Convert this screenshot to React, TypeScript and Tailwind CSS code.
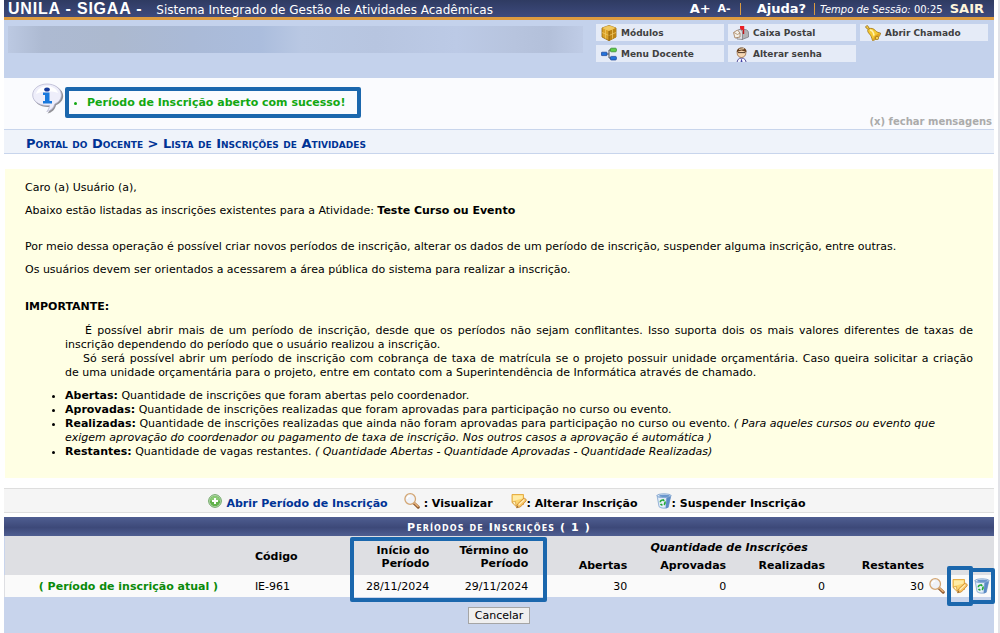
import type { ReactNode } from "react";

const QUICK_LINKS: { label: string; icon: ReactNode }[] = [
  { label: "Módulos", icon: <BoxIcon /> },
  { label: "Caixa Postal", icon: <MailboxIcon /> },
  { label: "Abrir Chamado", icon: <BellIcon /> },
  { label: "Menu Docente", icon: <TreeIcon /> },
  { label: "Alterar senha", icon: <UserIcon /> },
];

const PERIODS = [
  { code: "IE-961", start: "28/11/2024", end: "29/11/2024", open: 30, approved: 0, done: 0, left: 30 },
];

export default function App() {
  return (
    <div className="border-r-2 border-[#e2e3e8] bg-white pl-1 pr-1 font-['DejaVu_Sans',Verdana,sans-serif] text-[11px] leading-[14px] text-black">
      <TopBar />
      <UserPanel />
      <Messages />
      <h2 className="border-y border-[#c8d5ec] bg-[#eff3fa] px-[22px] pt-[6px] pb-[2px] text-[13px] leading-[15px] font-bold text-[#003395] [font-variant:small-caps]">
        <a href="#portal">Portal do Docente</a> &gt; Lista de Inscrições de Atividades
      </h2>
      <Description />
      <Legend />
      <PeriodsTable />
    </div>
  );
}

function TopBar() {
  return (
    <header className="flex h-5 items-center border-b-[3px] border-[#dc9b40] bg-linear-to-b from-[#2f3b62] to-[#3d4a7d] pl-1 pr-[10px] text-white">
      <h1 className="font-['Liberation_Sans',Arial,sans-serif] text-[16px] font-bold tracking-wider whitespace-nowrap">UNILA - SIGAA -</h1>
      <span className="ml-[14px] pt-[2px] text-[12px] whitespace-nowrap">Sistema Integrado de Gestão de Atividades Acadêmicas</span>
      <nav className="ml-auto flex items-center whitespace-nowrap font-bold">
        <button type="button" className="text-[13px]">A+</button>
        <button type="button" className="ml-[7px] text-[11px]">A-</button>
        <span className="ml-[9px] h-3 w-px bg-[#dc9b40]" />
        <a href="#ajuda" className="ml-[16px] text-[13px]">Ajuda?</a>
        <span className="ml-[8px] h-3 w-px bg-[#dc9b40]" />
        <span className="ml-[5px] pt-[2px] text-[10px] font-normal"><em>Tempo de Sessão:</em> 00:25</span>
        <a href="#sair" className="ml-[7px] text-[13px] text-[#fff5dc]">SAIR</a>
      </nav>
    </header>
  );
}

function UserPanel() {
  return (
    <section className="flex h-[58px] items-start bg-[#c4d2ec] pl-1 pr-[6px] pt-1">
      <div className="mt-[2px] mr-[13px] h-[27px] flex-1 bg-[linear-gradient(90deg,#bcc9e2_0%,#adbad2_6%,#acb9cf_18%,#aabad7_32%,#abbddd_44%,#b9c8e3_51%,#b7c5e0_64%,#bccae6_78%,#b7c4de_88%,#b3c0da_94%,#bfcce6_100%)]" />
      <nav className="grid w-[392px] grid-cols-3 gap-1">
        {QUICK_LINKS.map((l) => (
          <a key={l.label} href="#menu" className="flex h-[17px] items-center gap-1 overflow-hidden bg-[#e5ebf7] pl-[5px] text-[9px] font-bold whitespace-nowrap text-[#404040]">
            {l.icon}
            {l.label}
          </a>
        ))}
      </nav>
    </section>
  );
}

function Messages() {
  return (
    <section className="flex h-[51px] items-start bg-[#fafbfe] pl-7">
      <InfoIcon />
      <ul className="mt-[9px] ml-[1px] list-disc rounded-[2px] border-4 border-[#1b67ad] pt-[5px] pb-[4px] pl-[18px] pr-3 font-bold text-[#12a812]">
        <li>Período de Inscrição aberto com sucesso!</li>
      </ul>
      <button type="button" className="mr-[2px] ml-auto self-end text-[10px] font-bold text-[#ababab]">(x) fechar mensagens</button>
    </section>
  );
}

function Description() {
  return (
    <section className="mx-px mt-[15px] bg-[#ffffe4] px-5 pt-3 pb-[19px]">
      <p>Caro (a) Usuário (a),</p>
      <p className="mt-[9px]">
        Abaixo estão listadas as inscrições existentes para a Atividade: <b>Teste Curso ou Evento</b>
      </p>
      <p className="mt-[22px]">
        Por meio dessa operação é possível criar novos períodos de inscrição, alterar os dados de um período de inscrição, suspender alguma inscrição, entre outras.
      </p>
      <p className="mt-[9px]">Os usuários devem ser orientados a acessarem a área pública do sistema para realizar a inscrição.</p>
      <p className="mt-[23px] font-bold">IMPORTANTE:</p>
      <div className="mt-[10px] ml-10 text-justify">
        <p className="indent-5">
          É possível abrir mais de um período de inscrição, desde que os períodos não sejam conflitantes. Isso suporta dois os mais valores diferentes de taxas de inscrição dependendo do período que o usuário realizou a inscrição.
        </p>
        <p className="indent-[18px]">
          Só será possível abrir um período de inscrição com cobrança de taxa de matrícula se o projeto possuir unidade orçamentária. Caso queira solicitar a criação de&nbsp;uma unidade orçamentária para o projeto, entre em contato com a Superintendência de Informática através de chamado.
        </p>
      </div>
      <ul className="mt-[9px] list-disc pl-10">
        <li><b>Abertas:</b> Quantidade de inscrições que foram abertas pelo coordenador.</li>
        <li><b>Aprovadas:</b> Quantidade de inscrições realizadas que foram aprovadas para participação no curso ou evento.</li>
        <li>
          <b>Realizadas:</b> Quantidade de inscrições realizadas que ainda não foram aprovadas para participação no curso ou evento. <i>( Para aqueles cursos ou evento que exigem aprovação do coordenador ou pagamento de taxa de inscrição. Nos outros casos a aprovação é automática )</i>
        </li>
        <li><b>Restantes:</b> Quantidade de vagas restantes. <i>( Quantidade Abertas - Quantidade Aprovadas - Quantidade Realizadas)</i></li>
      </ul>
    </section>
  );
}

function Legend() {
  return (
    <div className="mt-[10px] flex h-[25px] items-center justify-center border-y border-[#dedede] bg-[#f5f5f5] pl-4 font-bold whitespace-nowrap">
      <PlusIcon />
      <a href="#abrir" className="mt-[6px] ml-1 text-[#003395]">Abrir Período de Inscrição</a>
      <span className="ml-4 flex"><LensIcon /></span>
      <span className="mt-[6px] ml-1">: Visualizar</span>
      <span className="ml-[18px] flex"><EditIcon /></span>
      <span className="mt-[6px]">: Alterar Inscrição</span>
      <span className="ml-[18px] flex"><TrashIcon /></span>
      <span className="mt-[6px]">: Suspender Inscrição</span>
    </div>
  );
}

function PeriodsTable() {
  return (
    <form className="mt-1 bg-[#c8d4ec] pb-[9px]">
      <table className="w-full table-fixed border-collapse">
        <caption className="h-[19px] bg-[linear-gradient(#4f5e91,#3d4979_55%,#4f5e91)] pt-[4px] text-[11px] font-bold tracking-widest text-white [font-variant:small-caps]">
          Períodos de Inscrições ( 1 )
        </caption>
        <colgroup>
          <col className="w-[25%]" />
          <col />
          <col className="w-[10%]" />
          <col className="w-[10%]" />
          <col className="w-[10%]" />
          <col className="w-[10%]" />
          <col className="w-[10%]" />
          <col className="w-[10%]" />
          <col className="w-[22px]" />
          <col className="w-[22px]" />
          <col className="w-[23px]" />
        </colgroup>
        <thead className="bg-[#dedfe3]">
          <tr className="h-[21px]">
            <th rowSpan={2} />
            <th rowSpan={2} className="px-[3px] pt-[2px] text-left">Código</th>
            <th rowSpan={2} className="relative pt-[2px] pr-[3px] pl-4 text-right leading-[13px]">
              Início do Período
              <span aria-hidden className="absolute -right-[115px] left-[17px] top-px h-[65px] rounded-[2px] border-4 border-[#1b67ad]" />
            </th>
            <th rowSpan={2} className="pt-[2px] pr-[3px] pl-4 text-right leading-[13px]">Término do Período</th>
            <th colSpan={4} className="pt-[2px] italic">Quantidade de Inscrições</th>
            <th rowSpan={2} colSpan={3} />
          </tr>
          <tr className="h-[18px] text-right align-top">
            <th className="px-[3px] pt-[2px]">Abertas</th>
            <th className="px-[3px] pt-[2px]">Aprovadas</th>
            <th className="px-[3px] pt-[2px]">Realizadas</th>
            <th className="px-[3px] pt-[2px]">Restantes</th>
          </tr>
        </thead>
        <tbody>
          {PERIODS.map((p) => (
            <tr key={p.code} className="h-[22px] bg-[#fafafa] text-right">
              <td className="border-l border-[#dedfe3] pt-[2px] text-center font-bold text-[#0a8a0a]">( Período de inscrição atual )</td>
              <td className="px-[3px] pt-[2px] text-left">{p.code}</td>
              <td className="px-[3px] pt-[2px]">{p.start}</td>
              <td className="px-[3px] pt-[2px]">{p.end}</td>
              <td className="px-[3px] pt-[2px]">{p.open}</td>
              <td className="px-[3px] pt-[2px]">{p.approved}</td>
              <td className="px-[3px] pt-[2px]">{p.done}</td>
              <td className="px-[3px] pt-[2px]">{p.left}</td>
              <td className="pl-[2px]">
                <button type="button" aria-label="Visualizar" className="flex"><LensIcon /></button>
              </td>
              <td className="pl-[3px]">
                <button type="button" aria-label="Alterar Inscrição" className="relative flex">
                  <EditIcon />
                  <span aria-hidden className="absolute -inset-x-[5px] -top-3 -bottom-3 rounded-[2px] border-4 border-[#1b67ad]" />
                </button>
              </td>
              <td className="pl-[3px]">
                <button type="button" aria-label="Suspender Inscrição" className="relative flex">
                  <TrashIcon />
                  <span aria-hidden className="absolute -inset-x-[5px] -inset-y-[10px] rounded-[2px] border-4 border-[#1b67ad]" />
                </button>
              </td>
            </tr>
          ))}
        </tbody>
      </table>
      <div className="flex justify-center pt-[10px]">
        <button type="button" className="h-[17px] border border-[#a5a5a5] bg-[#efefef] px-[6px]">Cancelar</button>
      </div>
    </form>
  );
}

function InfoIcon() {
  return (
    <svg className="mt-[5px] h-8 w-8 shrink-0" viewBox="0 0 32 32">
      <path d="M16 2C8 2 1.500 6.500 1.500 13S8 24 16 24c.9 0 1.600 0 2.500-.2-.4 3-1.500 5.200-3 6.700 4.500-.8 7.500-4 8.500-8.200 4-1.700 7.200-5 7.200-9.300C31.200 6.500 24 2 16 2z" fill="#77777c" opacity=".8" />
      <path d="M15 1C7 1 .7 5.700.7 12S7 22.500 15 22.500c.9 0 1.600 0 2.500-.2-.2 2.700-1.200 4.700-2.700 6.200 4.200-1 7-3.500 7.900-7.500 4-1.700 6.600-5 6.600-9C29.300 5.700 23 1 15 1z" fill="#eeeefa" stroke="#b9b9d2" strokeWidth=".8" />
      <path d="M4 11C5 6 10 3 15 3s10 3 11 7c-6-2-15-2-22 1z" fill="#fff" />
      <ellipse cx="15" cy="6.500" rx="2.800" ry="2" fill="#153b9b" />
      <path d="M11 9.500h6.500V18H20v2.500h-9V18h2v-6h-2z" fill="#1979dc" />
    </svg>
  );
}

function BoxIcon() {
  return (
    <svg className="h-4 w-4 shrink-0" viewBox="0 0 16 16">
      <path d="M1 3l7-2.500L15 3v9l-7 3.700L1 12z" fill="#dba22a" stroke="#94670f" strokeWidth=".8" />
      <path d="M1 3l7-2.500L15 3 8 6z" fill="#f0c75c" />
      <path d="M8 6l7-3v9l-7 3.700z" fill="#bd8415" />
      <path d="M1 7.500l7 3 7-3M4.500 1.700L11.500 4.600v9M11.500 1.700L4.500 4.600v9" fill="none" stroke="#f0cc68" strokeWidth=".7" />
      <path d="M8 6v9.500" stroke="#7d530b" strokeWidth=".8" />
    </svg>
  );
}

function MailboxIcon() {
  return (
    <svg className="h-4 w-4 shrink-0" viewBox="0 0 16 16">
      <path d="M6 4.500h6c2 0 3.500 1.500 3.500 3.500v4L9 14.500 6 11z" fill="#b2b2b5" stroke="#737378" strokeWidth=".7" />
      <path d="M4 14V8c0-2 1-3.500 2.700-3.500S9.500 6 9.500 8v6.500z" fill="#dedee2" stroke="#77777c" strokeWidth=".7" />
      <path d="M.5 7.500l4-2.500 2.500 3v4l-5 1z" fill="#f4f0e7" stroke="#a17a55" strokeWidth=".8" />
      <path d="M1 7.500l3.500 2L7 8" fill="none" stroke="#a17a55" strokeWidth=".7" />
      <path d="M10.500 9V1" stroke="#c31319" strokeWidth="1.400" />
      <path d="M7 1h4v4H8.700L7 3.500z" fill="#ea1f25" />
    </svg>
  );
}

function BellIcon() {
  return (
    <svg className="h-4 w-4 shrink-0" viewBox="0 0 16 16">
      <path d="M1.500.8C.3 1.500.5 3 2 3.500l1.500 1.300 1-1L3.500 2C3 .8 2.300.4 1.500.8z" fill="#f6d148" stroke="#92640e" strokeWidth=".8" />
      <path d="M3 4.500C4 3.200 7 2.800 9 4.300s2 3 6.500 3.700c0 3-4 7-8 7.500C6.500 12 6 10.500 4.500 9S2.200 5.800 3 4.500z" fill="#f5ca35" stroke="#a2730f" strokeWidth=".8" />
      <path d="M5 5c2 .2 3.500 2.500 4 5.500" stroke="#fff3ae" strokeWidth="1.600" fill="none" />
      <path d="M7.800 15.100C8.500 12 11 9 15 8.300c.2 2.700-4 6.500-7.200 6.800z" fill="#dda321" />
      <circle cx="12" cy="13" r="1.700" fill="#f4cf4a" stroke="#936510" strokeWidth=".6" />
    </svg>
  );
}

function TreeIcon() {
  return (
    <svg className="h-4 w-4 shrink-0" viewBox="0 0 16 16">
      <path d="M5 8h3M10 4H8v8h2" fill="none" stroke="#555" strokeWidth="1" />
      <rect x=".4" y="6.200" width="5.600" height="3.400" rx=".6" fill="#2474dc" stroke="#173f90" strokeWidth=".7" />
      <rect x="9.400" y="2.200" width="6" height="3.600" rx="1" fill="#5fd04a" stroke="#2c7f25" strokeWidth=".7" />
      <rect x="9.400" y="10.400" width="6" height="3.600" rx="1" fill="#2474dc" stroke="#173f90" strokeWidth=".7" />
    </svg>
  );
}

function UserIcon() {
  return (
    <svg className="mt-[2px] h-4 w-4 shrink-0" viewBox="0 0 16 16">
      <path d="M4 16c.2-3 1.500-5 4.500-5s4.500 2 4.700 5z" fill="#f4f4ff" stroke="#55529a" strokeWidth="1" />
      <path d="M8.500 11l-1.200 5h2.500z" fill="#4544a8" />
      <circle cx="8.500" cy="6.200" r="4.300" fill="#f7d7b2" stroke="#8b5a31" strokeWidth=".7" />
      <path d="M3.700 5.500C3.500 2 6 .5 8.700.5S14 2 13.500 5.500l-1-.7-4-1.300-4 1.300z" fill="#68401d" />
      <path d="M5 5.600h7" stroke="#3b2818" strokeWidth=".9" />
      <path d="M6 2.400l5-.8" stroke="#e0caa8" strokeWidth="1.100" />
    </svg>
  );
}

function PlusIcon() {
  return (
    <svg className="h-[14px] w-[14px] shrink-0" viewBox="0 0 14 14">
      <circle cx="7" cy="7" r="6.300" fill="#dcefd6" stroke="#5c9b52" strokeWidth="1" />
      <circle cx="7" cy="7" r="5.300" fill="#62b24c" />
      <path d="M2 7a5 5 0 0 1 10 0C9 5.800 5 5.800 2 7z" fill="#8bca76" />
      <path d="M7 4v6M4 7h6" stroke="#fff" strokeWidth="2" />
    </svg>
  );
}

function LensIcon() {
  return (
    <svg className="h-4 w-4 shrink-0" viewBox="0 0 16 16">
      <path d="M9.800 10l4.400 4.200" stroke="#8a5529" strokeWidth="3" strokeLinecap="round" />
      <path d="M10 9.700l4 3.700" stroke="#e2ae78" strokeWidth="1.700" strokeLinecap="round" />
      <circle cx="6.200" cy="6" r="5.300" fill="#eff2f8" stroke="#d3a673" strokeWidth="1.300" />
      <path d="M3.200 6c0-2 1.300-3 3-3" fill="none" stroke="#fff" strokeWidth="1.300" />
    </svg>
  );
}

function EditIcon() {
  return (
    <svg className="h-4 w-4 shrink-0" viewBox="0 0 16 16">
      <path d="M1 1.500h11.500v10H6.500L5 13 1 9.500z" fill="#fcd670" stroke="#e3a83c" strokeWidth=".9" />
      <path d="M2 2.500h9.500v3L2 8z" fill="#ffeba6" />
      <path d="M1 9l3.500-.5.500 5z" fill="#fff4cb" stroke="#d59a35" strokeWidth=".7" />
      <path d="M5.500 14.800l1-3.800 6-5.500q1-.6 2 .3t.7 2L9.300 14z" fill="#f9c462" stroke="#c98730" strokeWidth=".8" />
      <path d="M7.800 11.800L13.300 6.600" stroke="#fff0bf" strokeWidth="1.200" />
      <path d="M5.500 14.800l.6-2 1.500 1.500z" fill="#8b6030" />
    </svg>
  );
}

function TrashIcon() {
  return (
    <svg className="h-4 w-4 shrink-0" viewBox="0 0 16 16">
      <path d="M1 2.300L3 13.700c1.500 1.800 7.500 2.200 9.300.5L15 2.300z" fill="#c3d9f1" stroke="#6b94c4" strokeWidth=".6" />
      <path d="M10.500 4.500L15 2.500 12.300 14.200c-.7.6-1.600.9-2.600 1z" fill="#5b8bc6" />
      <path d="M2.300 5L3.700 13.300c1 .8 3 1.200 5 1L10 5z" fill="#e6eff9" />
      <ellipse cx="8" cy="2.700" rx="7" ry="1.900" fill="#dce9f7" stroke="#6b94c4" strokeWidth=".7" />
      <ellipse cx="8.500" cy="2.900" rx="5.300" ry="1.100" fill="#6a96cd" />
      <path d="M4.300 9.300A2.300 2.300 0 0 1 7.500 7.200M8.700 8.500a2.300 2.300 0 0 1-.8 3.200M6.500 12a2.300 2.300 0 0 1-1.900-1.200" fill="none" stroke="#1fa832" strokeWidth="1.600" />
      <path d="M7 5.900l2 1.300-2 1.300z" fill="#1fa832" />
    </svg>
  );
}
